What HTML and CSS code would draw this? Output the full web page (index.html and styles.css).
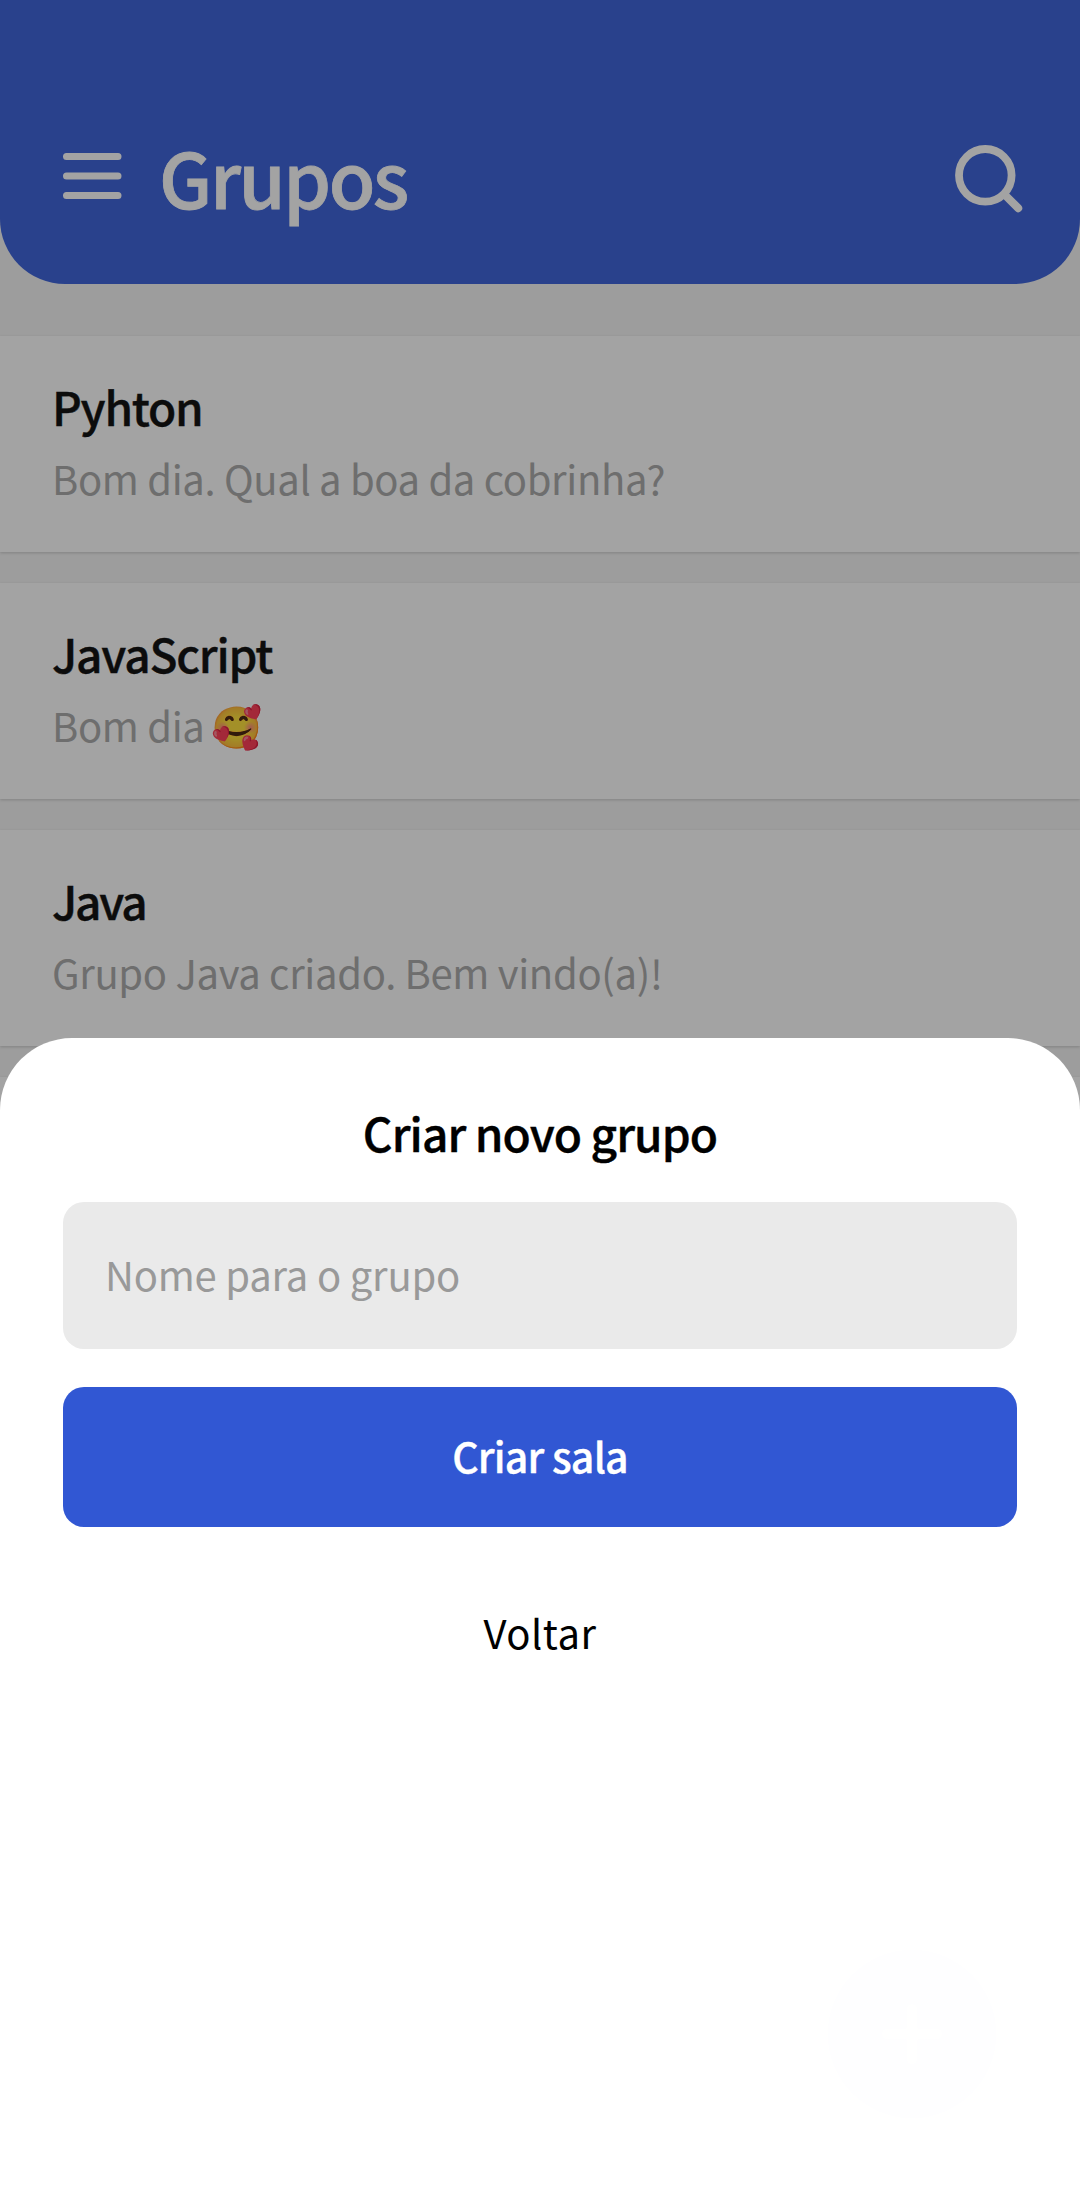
FILE: index.html
```html
<!DOCTYPE html>
<html lang="pt-BR">
<head>
  <meta charset="utf-8">
  <meta name="viewport" content="width=device-width">
  <title>Grupos</title>
  <link rel="stylesheet" href="styles.css">
</head>
<body>
  <div class="screen">
    <header class="header">
      <svg class="menu-icon" viewBox="0 0 60 50" fill="none" stroke="currentColor" stroke-width="7" stroke-linecap="round">
        <path d="M4.5 5.5H56M4.5 25H56M4.5 44.5H56"/>
      </svg>
      <h1 class="header-title">Grupos</h1>
      <svg class="search-icon" viewBox="0 0 68 68" fill="none" stroke="currentColor" stroke-linecap="round">
        <circle cx="30.3" cy="30.3" r="26.3" stroke-width="7.8"/>
        <path d="M50 50L63.2 63.2" stroke-width="8"/>
      </svg>
    </header>
    <main class="groups">
      <article class="card">
        <h2 class="card-title">Pyhton</h2>
        <p class="card-message">Bom dia. Qual a boa da cobrinha?</p>
      </article>
      <article class="card">
        <h2 class="card-title">JavaScript</h2>
        <p class="card-message">Bom dia <span class="emoji">🥰</span></p>
      </article>
      <article class="card">
        <h2 class="card-title card-title-short">Java</h2>
        <p class="card-message">Grupo Java criado. Bem vindo(a)!</p>
      </article>
      <article class="card"></article>
    </main>
    <div class="fab">
      <svg viewBox="0 0 60 60" width="60" height="60" stroke="#fff" stroke-width="11" stroke-linecap="round"><path d="M30 5.5v49M5.5 30h49"/></svg>
    </div>
    <div class="backdrop">
      <section class="sheet">
        <h2 class="sheet-title">Criar novo grupo</h2>
        <div class="field">Nome para o grupo</div>
        <div class="button">Criar sala</div>
        <div class="back">Voltar</div>
      </section>
    </div>
  </div>
</body>
</html>
```
FILE: styles.css
```css
* {
  box-sizing: border-box;
  margin: 0;
}

body {
  font-family: "Noto Sans CJK JP", "Noto Sans", sans-serif;
  font-weight: 400;
}

.screen {
  position: relative;
  width: 1080px;
  height: 2202px;
  overflow: hidden;
  background: #f6f6f6;
}

.header {
  display: flex;
  align-items: center;
  height: 284px;
  padding: 67px 57px 0 62px;
  color: #fff;
  background: #4066db;
  border-radius: 0 0 65px 65px;
}

.menu-icon {
  width: 60px;
  height: 50px;
}

.header-title {
  flex: 1;
  margin-left: 37px;
  font-size: 76px;
  font-weight: 500;
  line-height: 100px;
  letter-spacing: -2.4px;
  -webkit-text-stroke: 0.8px currentColor;
}

.search-icon {
  width: 68px;
  height: 68px;
  margin-top: 6px;
}

.groups {
  display: flex;
  flex-direction: column;
  gap: 31px;
  padding-top: 52px;
}

.card {
  height: 216px;
  padding: 40px 52px;
  background: #fff;
  box-shadow: 0 1px 3px rgba(0, 0, 0, 0.18);
}

.card-title {
  color: #141414;
  font-size: 46px;
  font-weight: 500;
  line-height: 60px;
  letter-spacing: -1.2px;
  -webkit-text-stroke: 0.4px currentColor;
}

.card-title-short {
  letter-spacing: -2.2px;
}

.card-message {
  margin-top: 12px;
  color: #acacac;
  font-size: 40px;
  line-height: 60px;
  letter-spacing: -0.33px;
}

.emoji {
  display: inline-block;
  margin-left: -2px;
  font-size: 41px;
  line-height: 1;
  filter: hue-rotate(-12deg) brightness(1.06);
}

.fab {
  position: absolute;
  right: 84px;
  bottom: 84px;
  display: grid;
  place-items: center;
  width: 168px;
  height: 168px;
  border-radius: 50%;
  background: #3157d3;
}

.backdrop {
  position: absolute;
  inset: 0;
  display: flex;
  flex-direction: column;
  justify-content: flex-end;
  background: rgba(0, 0, 0, 0.36);
}

.sheet {
  display: flex;
  flex-direction: column;
  height: 1164px;
  padding: 64px 63px 0;
  color: #000;
  text-align: center;
  background: rgba(255, 255, 255, 0.996);
  border-radius: 72px 72px 0 0;
}

.sheet-title {
  font-size: 46px;
  font-weight: 500;
  line-height: 60px;
  letter-spacing: -0.9px;
  -webkit-text-stroke: 0.4px currentColor;
}

.field {
  height: 147px;
  margin-top: 40px;
  padding-left: 42px;
  color: #999;
  font-size: 40px;
  line-height: 145px;
  letter-spacing: -0.2px;
  text-align: left;
  background: #eaeaea;
  border-radius: 21px;
}

.button {
  height: 140px;
  margin-top: 38px;
  color: #fff;
  font-size: 41px;
  font-weight: 500;
  line-height: 136px;
  letter-spacing: -0.8px;
  -webkit-text-stroke: 0.4px currentColor;
  background: #3157d3;
  border-radius: 21px;
}

.back {
  margin-top: 75px;
  font-size: 40px;
  line-height: 60px;
  letter-spacing: 0.5px;
}
```
